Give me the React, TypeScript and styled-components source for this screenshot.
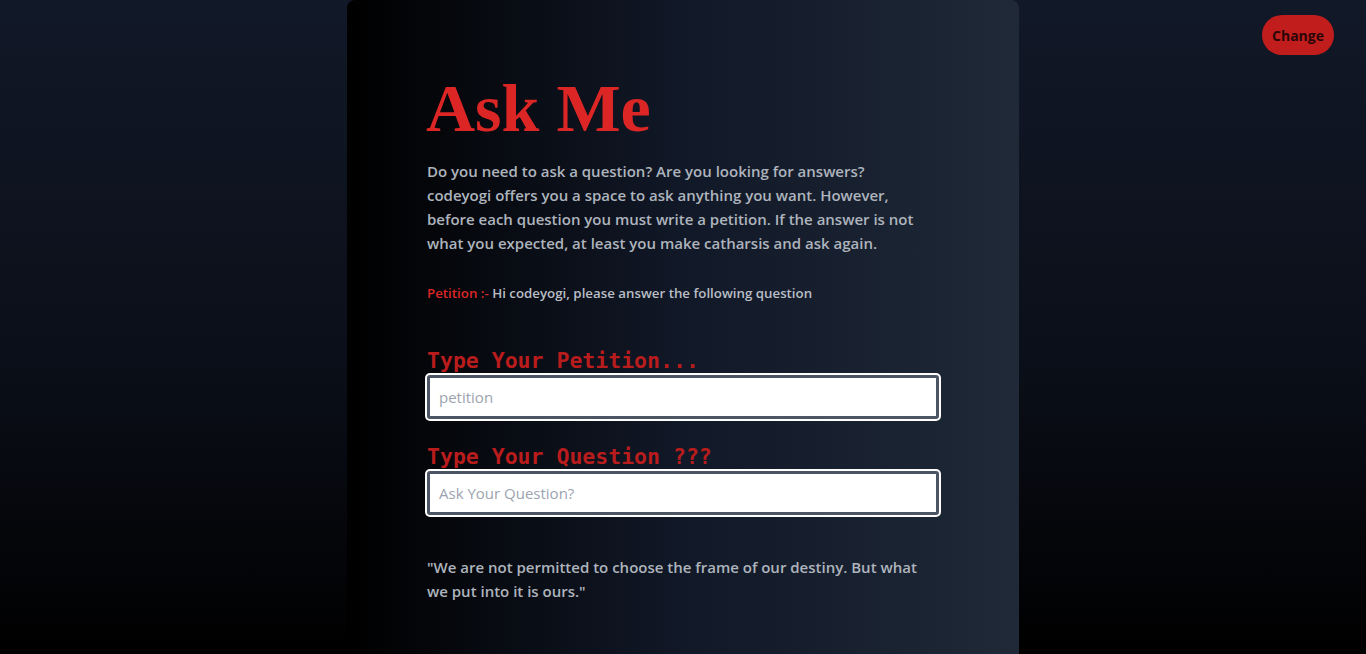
import React from "react";
import styled, { createGlobalStyle } from "styled-components";

const Global = createGlobalStyle`
  html, body { margin: 0; padding: 0; height: 100%; }
  body {
    background: linear-gradient(to bottom, #111827 0%, #0b0f19 55%, #000000 100%);
    font-family: "Open Sans", "Noto Sans", sans-serif;
    overflow: hidden;
  }
  #root { height: 654px; }
`;

const Page = styled.div`
  position: relative;
  height: 654px;
  display: flex;
  justify-content: center;
`;

const Card = styled.main`
  width: 672px;
  height: 700px;
  box-sizing: border-box;
  padding: 74px 80px 0 80px;
  background: linear-gradient(to right, #000000 0%, #111827 50%, #1f2937 100%);
  border-radius: 8px 8px 0 0;
  display: flex;
  flex-direction: column;
`;

const Title = styled.h1`
  margin: 0;
  font-family: "Liberation Serif", "Times New Roman", serif;
  font-weight: 700;
  font-size: 68px;
  line-height: 68px;
  color: #dc2626;
  margin-left: -1px;
`;

const Intro = styled.p`
  margin: 17px 0 0 0;
  max-width: 496px;
  font-size: 15px;
  font-weight: 600;
  line-height: 24px;
  color: #aeb4bd;
`;

const Petition = styled.p`
  margin: 28px 0 0 0;
  font-size: 13.3px;
  font-weight: 600;
  line-height: 20px;
  color: #b9bec6;
`;

const Red = styled.span`
  color: #dc2626;
`;

const Form = styled.form`
  margin-top: 46px;
  display: flex;
  flex-direction: column;
  width: 512px;
`;

const Label = styled.label<{ $top?: number }>`
  font-family: "DejaVu Sans Mono", "Liberation Mono", monospace;
  font-weight: 700;
  font-size: 21.5px;
  line-height: 24px;
  color: #b91c1c;
  margin-top: ${(p) => p.$top ?? 0}px;
`;

const Input = styled.input`
  margin-top: 2px;
  width: 100%;
  height: 44px;
  box-sizing: border-box;
  background: #ffffff;
  border: 3px solid #4b5563;
  box-shadow: 0 0 0 2px #ffffff;
  outline: none;
  border-radius: 3px;
  padding: 0 9px;
  font-family: "Open Sans", "Noto Sans", sans-serif;
  font-size: 15px;
  color: #111827;
  &::placeholder { color: #9ca3af; }
`;

const Quote = styled.p`
  margin: 40px 0 0 0;
  max-width: 512px;
  font-size: 15px;
  font-weight: 600;
  line-height: 24px;
  color: #aeb4bd;
`;

const ChangeButton = styled.button`
  position: absolute;
  top: 15px;
  right: 32px;
  width: 72px;
  height: 40px;
  border: none;
  border-radius: 20px;
  background: #c21d1d;
  color: #2a0606;
  font-family: "Open Sans", "Noto Sans", sans-serif;
  font-weight: 700;
  font-size: 14px;
  cursor: pointer;
`;

export default function App() {
  return (
    <>
      <Global />
      <Page>
        <Card>
          <Title>Ask Me</Title>
          <Intro>
            Do you need to ask a question? Are you looking for answers? codeyogi
            offers you a space to ask anything you want. However, before each
            question you must write a petition. If the answer is not what you
            expected, at least you make catharsis and ask again.
          </Intro>
          <Petition>
            <Red>Petition :-</Red> Hi codeyogi, please answer the following question
          </Petition>
          <Form onSubmit={(e) => e.preventDefault()}>
            <Label>Type Your Petition...</Label>
            <Input placeholder="petition" />
            <Label $top={26}>Type Your Question ???</Label>
            <Input placeholder="Ask Your Question?" />
          </Form>
          <Quote>
            "We are not permitted to choose the frame of our destiny. But what
            we put into it is ours."
          </Quote>
        </Card>
        <ChangeButton>Change</ChangeButton>
      </Page>
    </>
  );
}
